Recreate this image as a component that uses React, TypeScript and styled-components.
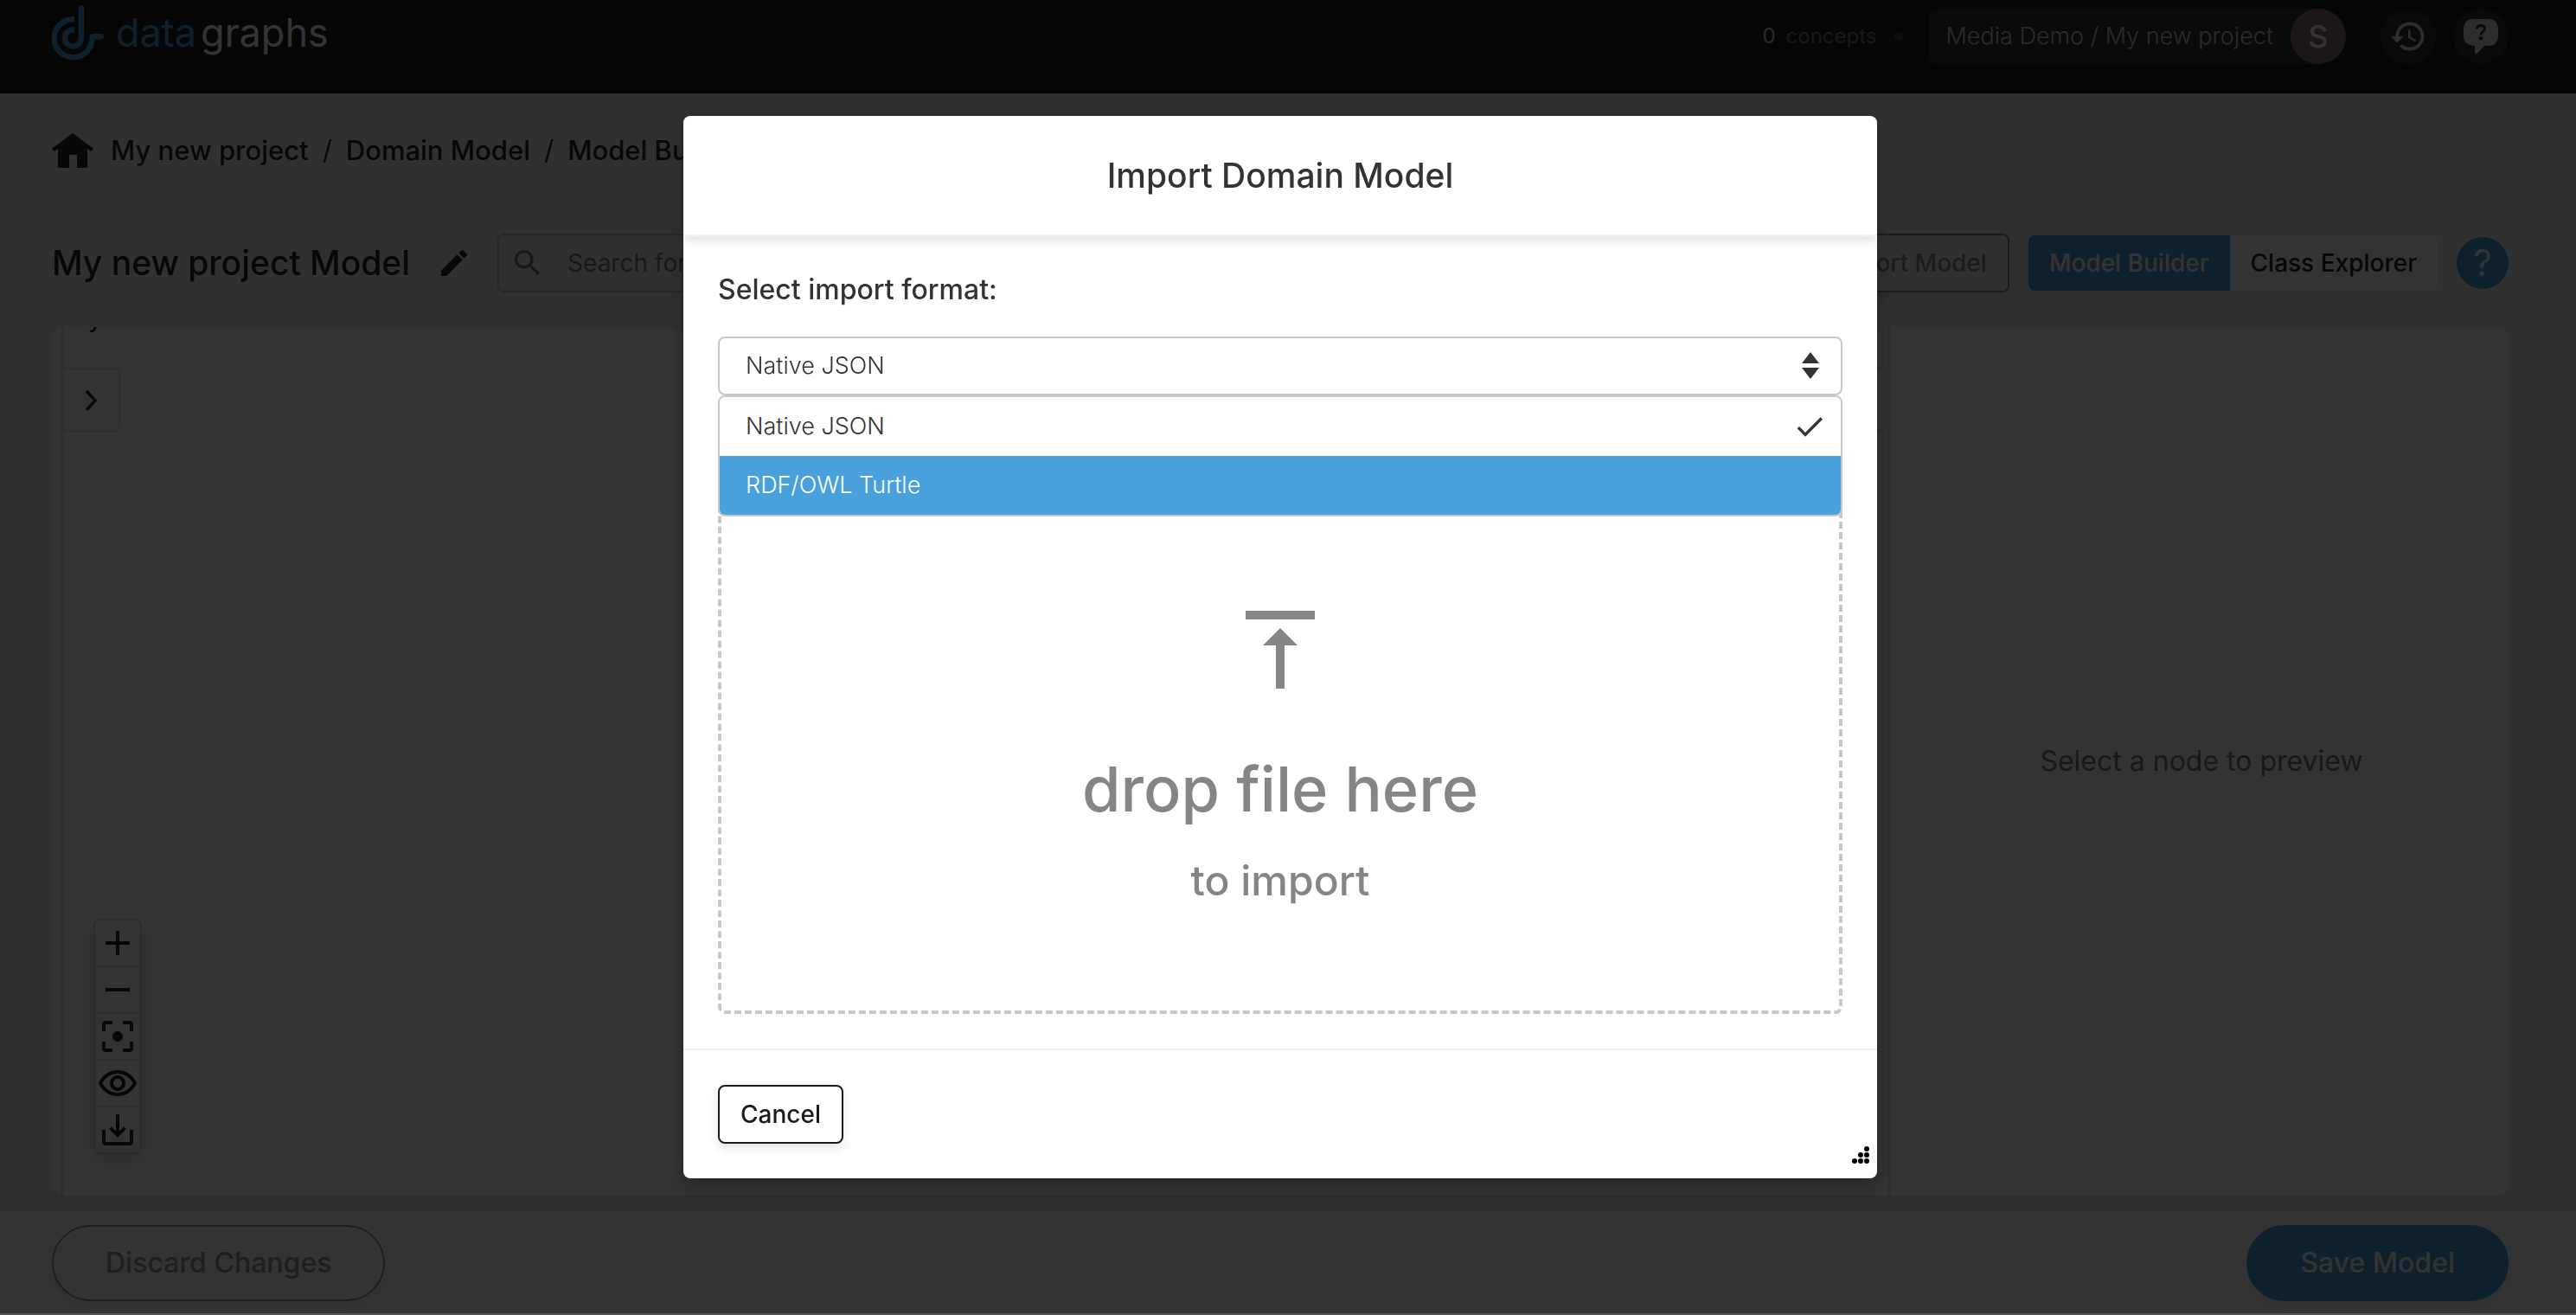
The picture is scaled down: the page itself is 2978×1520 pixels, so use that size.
import React, { useState } from "react";
import styled, { createGlobalStyle, css } from "styled-components";
import {
  MdAdd,
  MdCheck,
  MdEdit,
  MdFilterCenterFocus,
  MdHistory,
  MdOutlineRemoveRedEye,
  MdRemove,
  MdSaveAlt,
  MdSearch,
} from "react-icons/md";

const color = {
  ink: "#333333",
  black: "#1a1a1a",
  blue: "#48a0dc",
  line: "#c8c8c8",
  faint: "#e9e9e9",
  page: "#f0f0f0",
};

const GlobalStyle = createGlobalStyle`
  *, *::before, *::after { box-sizing: border-box; }
  body {
    margin: 0;
    background: ${color.page};
    color: ${color.ink};
    font-family: Inter, "Open Sans", sans-serif;
    font-size: 28px;
    line-height: 36px;
  }
  button, input, select { font: inherit; color: inherit; margin: 0; }
  button { cursor: pointer; }
  h1, h2, p, ul, ol { margin: 0; padding: 0; font-weight: inherit; }
  ul, ol { list-style: none; }
  a { color: inherit; text-decoration: none; }
  svg { display: block; flex: none; }
`;

/* ---------- Page shell ---------- */

const Page = styled.div`
  min-height: 100vh;
  display: flex;
  flex-direction: column;
`;

const TopBar = styled.header`
  display: flex;
  justify-content: space-between;
  align-items: flex-start;
  height: 108px;
  padding: 6px 78px 0 60px;
  background: ${color.black};
  color: #e0e0e0;
`;

const Brand = styled.a`
  display: flex;
  align-items: center;
  gap: 14px;
  font-size: 45px;
  line-height: 64px;
  color: #fff;
`;

const BrandAccent = styled.span`
  margin-right: 5px;
  color: ${color.blue};
`;

const TopActions = styled.div`
  display: flex;
  align-items: center;
  padding-top: 4px;
`;

const Counter = styled.p`
  display: flex;
  gap: 12px;
  font-size: 24px;
  color: #777;
`;

const Count = styled.span`
  color: #d0d0d0;
`;

const Dot = styled.span`
  width: 10px;
  height: 10px;
  margin: 0 30px 0 20px;
  border-radius: 50%;
  background: #444;
`;

const ProjectSwitch = styled.button`
  display: flex;
  align-items: center;
  gap: 20px;
  height: 64px;
  margin-right: 40px;
  padding: 0 0 0 20px;
  border: 0;
  border-radius: 8px 32px 32px 8px;
  background: #2c3331;
  color: #cfcfcf;
  font-size: 27px;
  font-weight: 300;
`;

const Avatar = styled.span`
  display: grid;
  place-items: center;
  width: 64px;
  height: 64px;
  border-radius: 50%;
  background: #8d6e63;
  color: #fff;
  font-size: 36px;
  font-weight: 500;
`;

const RoundButton = styled.button`
  display: grid;
  place-items: center;
  width: 64px;
  height: 64px;
  padding: 0;
  border: 0;
  border-radius: 50%;
  background: #2c3331;
  color: #e0e0e0;

  & + & {
    margin-left: 20px;
  }
`;

const Content = styled.main`
  flex: 1;
  display: flex;
  flex-direction: column;
  padding: 44px 78px 18px 60px;
  color: #262626;
`;

const Crumbs = styled.ol`
  display: flex;
  align-items: center;
  height: 44px;
  font-size: 31px;
  font-weight: 500;
`;

const Crumb = styled.li`
  display: flex;
  align-items: center;

  & + &::before {
    content: "/";
    margin: 0 16px;
    font-weight: 400;
  }
`;

const HomeItem = styled.li`
  margin-right: 20px;
`;

const Toolbar = styled.div`
  display: flex;
  align-items: center;
  gap: 22px;
  margin-top: 74px;
`;

const ModelTitle = styled.h1`
  display: flex;
  align-items: center;
  gap: 31px;
  margin-right: 8px;
  font-size: 39px;
  font-weight: 500;
  line-height: 48px;
  white-space: nowrap;
`;

const IconButton = styled.button`
  padding: 0;
  border: 0;
  background: none;
`;

const SearchBox = styled.label`
  flex: 1;
  display: flex;
  align-items: center;
  gap: 24px;
  height: 68px;
  padding: 0 16px 0 13px;
  border: 2px solid ${color.line};
  border-radius: 8px;
  color: #777;
`;

const SearchInput = styled.input`
  flex: 1;
  min-width: 0;
  border: 0;
  outline: 0;
  background: none;

  &::placeholder {
    color: #777;
    opacity: 1;
  }
`;

const OutlineButton = styled.button<{ $muted?: boolean }>`
  height: 68px;
  padding: 0 24px;
  border: 2px solid ${(p) => (p.$muted ? "#888" : color.black)};
  border-radius: 8px;
  background: ${(p) => (p.$muted ? "transparent" : "#fff")};
  color: ${(p) => (p.$muted ? "#888" : color.black)};
  font-size: 28px;
  font-weight: 500;
  white-space: nowrap;
  box-shadow: 0 6px 12px rgba(0, 0, 0, 0.1);
`;

const Segments = styled.div`
  display: flex;
  height: 64px;
  border-radius: 8px;
  overflow: hidden;
`;

const Segment = styled.button<{ $active?: boolean }>`
  padding: 0 24px;
  border: 0;
  font-size: 28px;
  font-weight: 500;
  white-space: nowrap;
  ${(p) =>
    p.$active
      ? css`
          background: ${color.blue};
          color: #fff;
        `
      : css`
          background: #fff;
          color: #262626;
        `}
`;

const HelpButton = styled.button`
  display: grid;
  place-items: center;
  width: 60px;
  height: 60px;
  padding: 0;
  border: 0;
  border-radius: 50%;
  background: ${color.blue};
  color: #fff;
  font-size: 42px;
`;

/* ---------- Workspace ---------- */

const Workspace = styled.section`
  flex: 1;
  display: flex;
  margin-top: 40px;
  padding-left: 10px;
  border-radius: 12px;
  background: #fff;
  box-shadow: 0 6px 12px rgba(0, 0, 0, 0.1);
`;

const Canvas = styled.div`
  flex: 1;
  display: flex;
  justify-content: space-between;
  border: solid ${color.faint};
  border-width: 0 4px;
`;

const CanvasSide = styled.div`
  display: flex;
  flex-direction: column;
  justify-content: space-between;
  padding-bottom: 48px;
`;

const PanelLabel = styled.p`
  display: flex;
  align-items: flex-end;
  height: 8px;
  margin-left: 10px;
  overflow: hidden;
  font-weight: 500;
`;

const TabStack = styled.div`
  height: 122px;
  display: flex;
  flex-direction: column;
  justify-content: space-between;
`;

const PanelTab = styled.button`
  display: grid;
  place-items: center;
  width: 66px;
  height: 75px;
  padding: 0;
  border: 3px solid ${color.faint};
  border-left: 0;
  border-radius: 0 8px 8px 0;
  background: #fff;
`;

const ViewTools = styled.div`
  width: 56px;
  margin-left: 34px;
  border: 2px solid #dcdcdc;
  border-radius: 8px;
  background: #fff;
  box-shadow: 0 6px 16px rgba(0, 0, 0, 0.12);
`;

const ViewTool = styled.button`
  display: grid;
  place-items: center;
  width: 52px;
  height: 52px;
  padding: 0;
  border: 0;
  background: none;

  & + & {
    height: 54px;
    border-top: 2px solid #dcdcdc;
  }
`;

const Preview = styled.aside`
  display: grid;
  place-items: center;
  width: 714px;
  padding-left: 4px;
  font-size: 32px;
  color: #777;
`;

const BottomBar = styled.footer`
  display: flex;
  justify-content: space-between;
  height: 120px;
  padding: 16px 78px 16px 60px;
  background: #fff;
  box-shadow: 0 -6px 16px rgba(0, 0, 0, 0.1);
`;

const PillButton = styled.button<{ $primary?: boolean }>`
  height: 88px;
  padding: 0 60px;
  border-radius: 44px;
  border: 2px solid ${(p) => (p.$primary ? color.blue : "#969696")};
  background: ${(p) => (p.$primary ? color.blue : "#fff")};
  color: ${(p) => (p.$primary ? "#fff" : "#969696")};
  font-size: 32px;
  font-weight: 500;
  box-shadow: 0 6px 12px rgba(0, 0, 0, 0.08);
`;

/* ---------- Dialog ---------- */

const Backdrop = styled.div`
  position: fixed;
  inset: 0;
  display: flex;
  justify-content: center;
  align-items: flex-start;
  padding: 134px 18px 0 0;
  border-bottom: 2px solid #555;
  background: rgba(0, 0, 0, 0.8);
`;

const Dialog = styled.section`
  width: 1380px;
  max-width: 90%;
  border-radius: 8px;
  background: #fff;
  box-shadow: 0 8px 24px rgba(0, 0, 0, 0.3);
`;

const DialogHeader = styled.header`
  padding: 44px 40px;
  border-bottom: 2px solid #f2f2f2;
  box-shadow: 0 6px 12px rgba(0, 0, 0, 0.1);
  text-align: center;
`;

const DialogTitle = styled.h2`
  font-size: 39px;
  font-weight: 500;
  line-height: 49px;
`;

const DialogBody = styled.div`
  padding: 40px;
`;

const FieldLabel = styled.label`
  display: block;
  margin-bottom: 32px;
  font-size: 32px;
  font-weight: 500;
  line-height: 44px;
`;

const SelectField = styled.div`
  position: relative;
`;

const FormatSelect = styled.select`
  display: block;
  width: 100%;
  height: 68px;
  padding: 0 30px;
  border: 2px solid ${color.line};
  border-radius: 8px;
  outline: 0;
  appearance: none;
  background: #fff;
  font-size: 27px;
  font-weight: 300;
`;

const SelectArrows = styled.svg`
  position: absolute;
  top: 18px;
  right: 26px;
  pointer-events: none;
`;

const OptionList = styled.ul`
  position: absolute;
  top: 100%;
  left: 0;
  right: 0;
  border: 2px solid ${color.line};
  border-radius: 8px;
  background: #fff;
  font-size: 27px;
  font-weight: 300;
  overflow: hidden;
`;

const Option = styled.li<{ $active?: boolean }>`
  display: flex;
  justify-content: space-between;
  align-items: center;
  height: 68px;
  padding: 0 16px 0 30px;
  background: ${(p) => (p.$active ? color.blue : "#fff")};
  color: ${(p) => (p.$active ? "#fff" : color.ink)};
`;

const DropZone = styled.div`
  display: flex;
  flex-direction: column;
  align-items: center;
  margin-top: 40px;
  padding: 205px 0 110px;
  border: 4px dashed ${color.line};
  border-radius: 8px;
  color: #858585;
  font-weight: 500;
`;

const DropTitle = styled.p`
  margin-top: 72px;
  font-size: 72px;
  line-height: 88px;
`;

const DropHint = styled.p`
  margin-top: 22px;
  font-size: 48px;
  line-height: 80px;
`;

const DialogFooter = styled.footer`
  position: relative;
  padding: 40px;
  border-top: 2px solid #f2f2f2;
`;

const ResizeGrip = styled.svg`
  position: absolute;
  right: 8px;
  bottom: 16px;
`;

/* ---------- Drawings ---------- */

const LogoMark = () => (
  <svg width="60" height="64" viewBox="60 6 60 64" fill="none" stroke={color.blue} strokeWidth="6.4">
    <path d="M86 22.2h-1.5a22 22 0 1 0 22 21.8q0-1.8 1.6-1.8H116.8" />
    <path d="M86 34.5h-1.5a9.5 9.5 0 1 0 9.5 9.5V9.2" />
    <path d="M94 12V9.2M114 42.2h2.8" strokeLinecap="round" />
  </svg>
);

const HomeIcon = () => (
  <svg width="48" height="40" viewBox="0 0 48 40" fill="currentColor">
    <path d="M23 .4q1-.8 2 0l23 17.4-2.400 3.200L41 18v20q0 2-2 2H29V25h-9v15H9q-2 0-2-2V18l-4.600 3L0 17.800z" />
  </svg>
);

const ChatHelpIcon = () => (
  <svg width="40" height="40" viewBox="0 0 40 40">
    <path
      d="M12 0h16q12 0 12 12v7q0 12-12 12h-4l-8 8.500q-3 1.500-3-1.500v-7Q0 30 0 19v-7Q0 0 12 0z"
      fill="#e0e0e0"
    />
    <path
      d="M15.500 11.500q0-4 4.500-4t4.500 3.700c0 3-4.500 3.400-4.500 7.300"
      fill="none"
      stroke="#2c3331"
      strokeWidth="3"
    />
    <circle cx="20" cy="22.200" r="2.300" fill="#2c3331" />
  </svg>
);

const Chevron = ({ flip = false }: { flip?: boolean }) => (
  <svg width="16" height="26" viewBox="0 0 16 26" fill="none" stroke="currentColor" strokeWidth="3.600">
    <path d={flip ? "M14 2L4 13l10 11" : "M2 2l10 11L2 24"} />
  </svg>
);

const UploadIcon = () => (
  <svg width="80" height="90" viewBox="0 0 80 90" fill="currentColor">
    <path d="M0 0h80v10H0zM40 20l20 20H45v50H35V40H20z" />
  </svg>
);

const viewTools = [
  { label: "Zoom in", Icon: MdAdd },
  { label: "Zoom out", Icon: MdRemove },
  { label: "Centre", Icon: MdFilterCenterFocus },
  { label: "Show", Icon: MdOutlineRemoveRedEye },
  { label: "Download", Icon: MdSaveAlt },
];

const formats = ["Native JSON", "RDF/OWL Turtle"];
const crumbs = ["My new project", "Domain Model", "Model Builder"];

export default function App() {
  const [format, setFormat] = useState(formats[0]);
  const [hovered, setHovered] = useState(formats[1]);

  return (
    <>
      <GlobalStyle />
      <Page>
        <TopBar>
          <Brand href="#" aria-label="datagraphs">
            <LogoMark />
            <span>
              <BrandAccent>data</BrandAccent>graphs
            </span>
          </Brand>
          <TopActions>
            <Counter>
              <Count>0</Count> concepts
            </Counter>
            <Dot />
            <ProjectSwitch>
              Media Demo / My new project
              <Avatar>S</Avatar>
            </ProjectSwitch>
            <RoundButton aria-label="History">
              <MdHistory size={44} />
            </RoundButton>
            <RoundButton aria-label="Support">
              <ChatHelpIcon />
            </RoundButton>
          </TopActions>
        </TopBar>

        <Content>
          <Crumbs>
            <HomeItem>
              <a href="#" aria-label="Home">
                <HomeIcon />
              </a>
            </HomeItem>
            {crumbs.map((name) => (
              <Crumb key={name}>
                <a href="#">{name}</a>
              </Crumb>
            ))}
          </Crumbs>

          <Toolbar>
            <ModelTitle>
              My new project Model
              <IconButton aria-label="Rename model">
                <MdEdit size={40} />
              </IconButton>
            </ModelTitle>
            <SearchBox>
              <MdSearch size={40} />
              <SearchInput aria-label="Search" placeholder="Search for a class" />
            </SearchBox>
            <OutlineButton $muted>Import Model</OutlineButton>
            <OutlineButton $muted>Export Model</OutlineButton>
            <Segments>
              <Segment $active>Model Builder</Segment>
              <Segment>Class Explorer</Segment>
            </Segments>
            <HelpButton aria-label="Help">?</HelpButton>
          </Toolbar>

          <Workspace>
            <Canvas>
              <CanvasSide>
                <TabStack>
                  <PanelLabel>System</PanelLabel>
                  <PanelTab aria-label="Open left panel">
                    <Chevron />
                  </PanelTab>
                </TabStack>
                <ViewTools>
                  {viewTools.map(({ label, Icon }) => (
                    <ViewTool key={label} aria-label={label}>
                      <Icon size={48} />
                    </ViewTool>
                  ))}
                </ViewTools>
              </CanvasSide>
              <CanvasSide>
                <TabStack>
                  <span />
                  <PanelTab aria-label="Open right panel">
                    <Chevron flip />
                  </PanelTab>
                </TabStack>
              </CanvasSide>
            </Canvas>
            <Preview>Select a node to preview</Preview>
          </Workspace>
        </Content>

        <BottomBar>
          <PillButton>Discard Changes</PillButton>
          <PillButton $primary>Save Model</PillButton>
        </BottomBar>
      </Page>

      <Backdrop>
        <Dialog role="dialog" aria-modal="true" aria-labelledby="dialog-title">
          <DialogHeader>
            <DialogTitle id="dialog-title">Import Domain Model</DialogTitle>
          </DialogHeader>
          <DialogBody>
            <FieldLabel htmlFor="format">Select import format:</FieldLabel>
            <SelectField>
              <FormatSelect id="format" value={format} onChange={(e) => setFormat(e.target.value)}>
                {formats.map((name) => (
                  <option key={name}>{name}</option>
                ))}
              </FormatSelect>
              <SelectArrows width="22" height="32" viewBox="0 0 22 32" fill={color.ink}>
                <path d="M11 0l10 13H1zM1 18h20L11 31z" />
              </SelectArrows>
              <OptionList role="listbox" aria-label="Import format">
                {formats.map((name) => (
                  <Option
                    key={name}
                    role="option"
                    aria-selected={name === format}
                    $active={name === hovered}
                    onMouseEnter={() => setHovered(name)}
                    onClick={() => setFormat(name)}
                  >
                    {name}
                    {name === format && <MdCheck size={40} />}
                  </Option>
                ))}
              </OptionList>
            </SelectField>
            <DropZone>
              <UploadIcon />
              <DropTitle>drop file here</DropTitle>
              <DropHint>to import</DropHint>
            </DropZone>
          </DialogBody>
          <DialogFooter>
            <OutlineButton>Cancel</OutlineButton>
            <ResizeGrip width="22" height="22" viewBox="0 0 22 22" fill="#000">
              {[
                [18, 4],
                [11, 11],
                [18, 11],
                [4, 18],
                [11, 18],
                [18, 18],
              ].map(([x, y]) => (
                <circle key={`${x}-${y}`} cx={x} cy={y} r="3" />
              ))}
            </ResizeGrip>
          </DialogFooter>
        </Dialog>
      </Backdrop>
    </>
  );
}
